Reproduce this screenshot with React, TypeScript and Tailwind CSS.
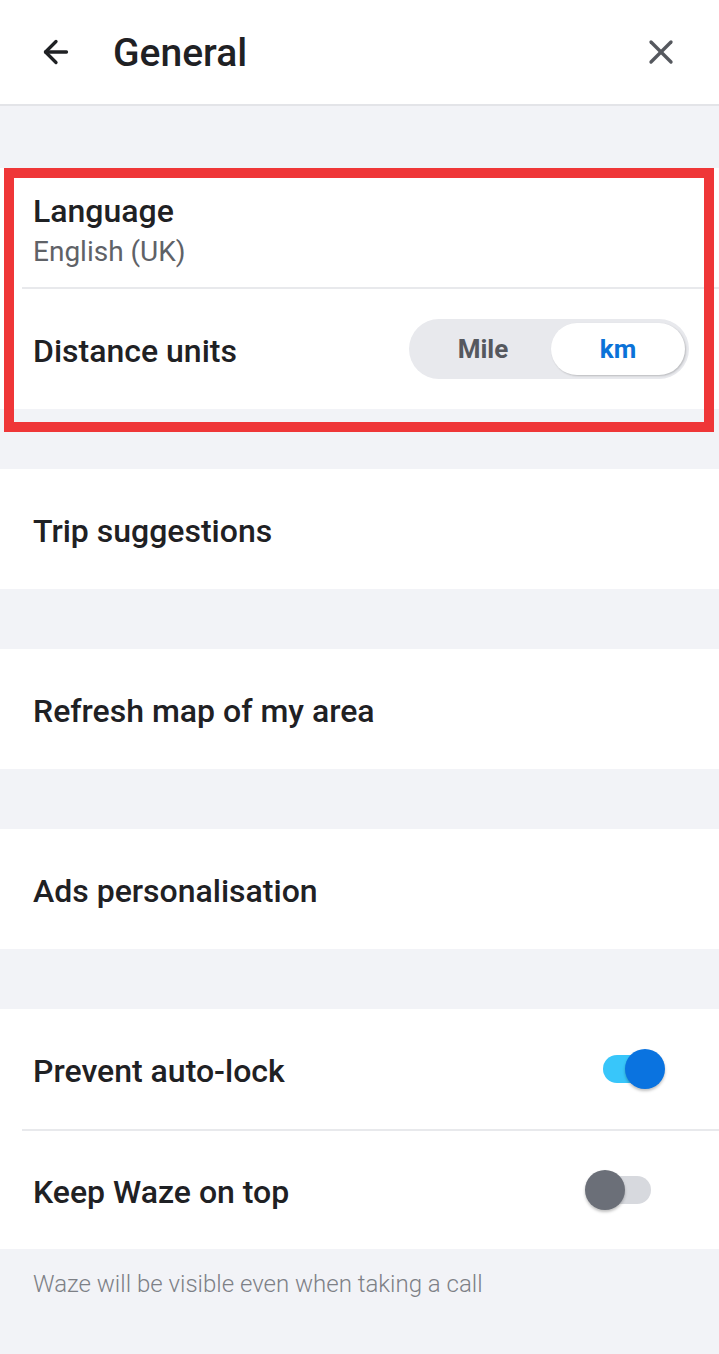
import { ArrowLeft, X } from "lucide-react";

function Toggle({ on }: { on: boolean }) {
  return (
    <div className="relative h-[40px] w-[66px]">
      <div
        className={
          on
            ? "absolute left-[4px] top-[6px] h-[28px] w-[50px] rounded-full bg-[#38c6fa]"
            : "absolute left-[16px] top-[6px] h-[28px] w-[50px] rounded-full bg-[#d7d9de]"
        }
      />
      <div
        className={
          on
            ? "absolute left-[26px] top-0 h-[40px] w-[40px] rounded-full bg-[#0a73e0] shadow-[0_2px_3px_rgba(0,0,0,0.25)]"
            : "absolute left-0 top-0 h-[40px] w-[40px] rounded-full bg-[#6b6f78] shadow-[0_2px_3px_rgba(0,0,0,0.25)]"
        }
      />
    </div>
  );
}

function Row({ label, children }: { label: string; children?: React.ReactNode }) {
  return (
    <div className="flex h-[120px] items-center justify-between pl-[33px] pr-[54px]">
      <span className="pt-[4px] text-[32px] font-medium text-[#1f2124]">{label}</span>
      {children}
    </div>
  );
}

export default function App() {
  return (
    <div className="flex min-h-[1354px] flex-col bg-[#f2f3f7] font-['Roboto',sans-serif]">
      <header className="flex h-[106px] items-center border-b-2 border-[#e3e4e8] bg-white pl-[38px] pr-[38px]">
        <ArrowLeft className="h-[36px] w-[36px] text-[#1f2124]" strokeWidth={2.2} />
        <h1 className="ml-[39px] flex-1 pt-[2px] text-[39px] font-medium text-[#1f2124]">General</h1>
        <X className="h-[40px] w-[40px] text-[#55585e]" strokeWidth={2} />
      </header>

      <div className="relative mt-[62px] bg-white">
        <div className="flex h-[119px] flex-col justify-center pl-[33px] pt-[6px]">
          <span className="text-[32px] font-medium leading-[40px] text-[#1f2124]">Language</span>
          <span className="mt-[3px] text-[28px] leading-[36px] text-[#5f6267]">English (UK)</span>
        </div>
        <div className="ml-[22px] h-[2px] bg-[#e8e9ec]" />
        <div className="flex h-[120px] items-center justify-between pl-[33px] pr-[30px]">
          <span className="pt-[4px] text-[32px] font-medium text-[#1f2124]">Distance units</span>
          <div className="flex h-[60px] w-[280px] items-center rounded-full bg-[#e8e9ed] p-[4px]">
            <span className="flex-1 pl-[2px] text-center text-[26px] font-bold text-[#55585e]">Mile</span>
            <span className="flex h-[52px] w-[134px] items-center justify-center rounded-full bg-white text-[26px] font-bold text-[#0b72d8] shadow-[1px_1px_2px_rgba(0,0,0,0.2)]">
              km
            </span>
          </div>
        </div>
        <div className="pointer-events-none absolute left-[4px] top-0 h-[264px] w-[710px] border-[10px] border-[#ef3638]" />
      </div>

      <div className="mt-[60px] bg-white">
        <Row label="Trip suggestions" />
      </div>
      <div className="mt-[60px] bg-white">
        <Row label="Refresh map of my area" />
      </div>
      <div className="mt-[60px] bg-white">
        <Row label="Ads personalisation" />
      </div>
      <div className="mt-[60px] bg-white">
        <Row label="Prevent auto-lock">
          <Toggle on />
        </Row>
        <div className="ml-[22px] h-[2px] bg-[#e8e9ec]" />
        <div className="flex h-[118px] items-center justify-between pl-[33px] pr-[68px]">
          <span className="pt-[4px] text-[32px] font-medium text-[#1f2124]">Keep Waze on top</span>
          <Toggle on={false} />
        </div>
      </div>
      <p className="pl-[33px] pt-[17px] text-[24px] font-light text-[#7d8086]">
        Waze will be visible even when taking a call
      </p>
    </div>
  );
}
